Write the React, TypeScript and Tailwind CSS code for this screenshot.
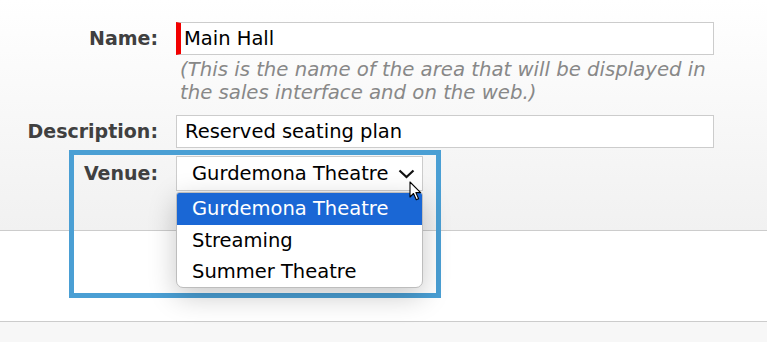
import React from "react";

const Label = ({ children, className = "" }: { children: React.ReactNode; className?: string }) => (
  <div className={`flex items-center justify-end text-[19px] font-bold text-[#404040] ${className}`}>{children}</div>
);

const Cursor = () => (
  <svg width="13" height="20" viewBox="0 0 13 20" className="absolute left-[409px] top-[181px]">
    <path d="M1 1 L1 16 L4.5 12.5 L7.3 18.8 L9.6 17.8 L6.9 11.6 L11.6 11.6 Z" fill="#fff" stroke="#000" strokeWidth="1.1" strokeLinejoin="round" />
  </svg>
);

const App = () => {
  const venues = ["Gurdemona Theatre", "Streaming", "Summer Theatre"];

  return (
    <div className="relative w-[767px] h-[342px] overflow-hidden bg-[#f7f7f7] font-['DejaVu_Sans',sans-serif]">
      {/* Form area */}
      <div className="h-[231px] border-b border-[#cccccc] bg-linear-to-b from-white to-[#f1f1f1] pt-[22px]">
        <div className="grid grid-cols-[158px_538px] gap-x-[18px]">
          <Label>Name:</Label>
          <div className="h-[33px] flex items-center border border-[#cccccc] border-l-[5px] border-l-[#f20000] bg-white pl-[3px] text-[19.5px] text-black">
            Main Hall
          </div>

          <div />
          <div className="mt-[3px] pl-[4px] text-[19.7px] leading-[23px] italic text-[#888888] whitespace-nowrap">
            (This is the name of the area that will be displayed in
            <br />
            the sales interface and on the web.)
          </div>

          <Label className="mt-[11px]">Description:</Label>
          <div className="mt-[11px] h-[33px] flex items-center border border-[#cccccc] bg-white pl-[8px] text-[19.5px] text-black">
            Reserved seating plan
          </div>

          <Label className="mt-[8px]">Venue:</Label>
          <div className="mt-[8px]">
            <div className="w-[247px] h-[35px] flex items-center justify-between border border-[#cccccc] bg-white pl-[15px] pr-[7px] text-[19.5px] text-black">
              <span>Gurdemona Theatre</span>
              <svg width="17" height="10" viewBox="0 0 17 10">
                <path d="M1.5 1.5 L8.5 8 L15.5 1.5" fill="none" stroke="#111" strokeWidth="2.2" />
              </svg>
            </div>
          </div>
        </div>
      </div>

      <div className="h-[91px] border-b border-[#cccccc] bg-white" />

      {/* Highlight frame */}
      <div className="absolute left-[69px] top-[150px] w-[372px] h-[148px] border-[5px] border-[#4a9fd4] pointer-events-none" />

      {/* Open dropdown list */}
      <ul className="absolute left-[176px] top-[192px] w-[247px] h-[96px] overflow-hidden rounded-[7px] rounded-t-[3px] border border-[#bdbdbd] bg-white shadow-[0_8px_28px_rgba(0,0,0,0.22)] text-[19.5px]">
        {venues.map((v, i) => (
          <li
            key={v}
            className={
              i === 0
                ? "h-[32px] flex items-center pl-[15px] bg-[#1a67d5] text-white"
                : "h-[31px] flex items-center pl-[15px] text-black"
            }
          >
            {v}
          </li>
        ))}
      </ul>

      <Cursor />
    </div>
  );
};

export default App;
